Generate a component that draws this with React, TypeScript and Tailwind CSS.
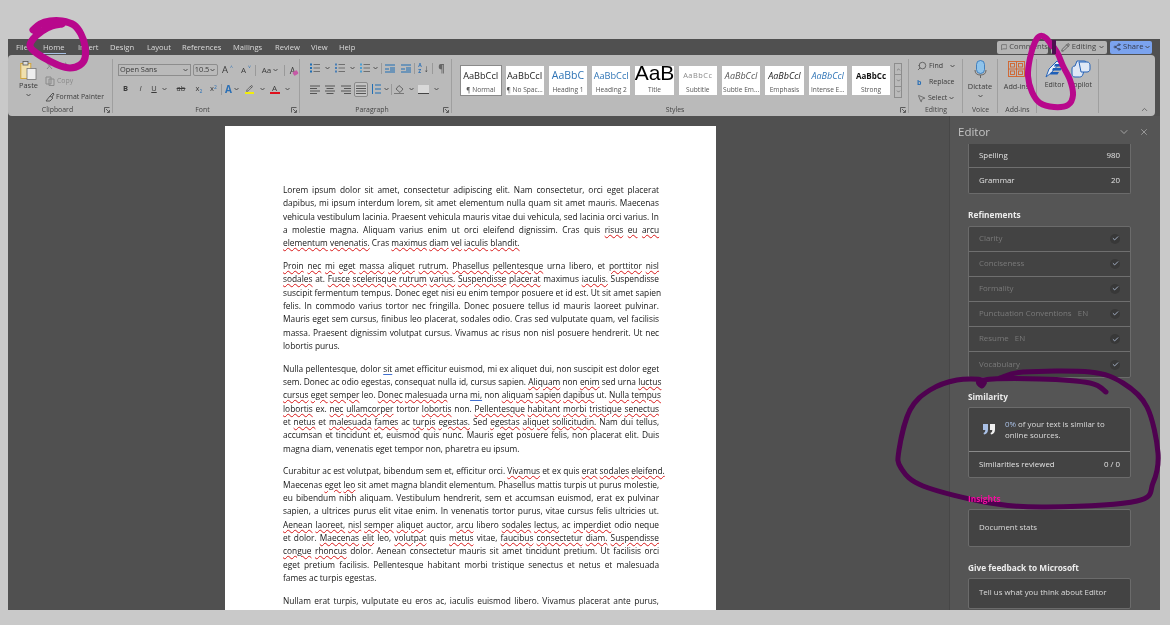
import React from "react";
import { Check, ChevronDown, ChevronUp, X, Search, MessageSquare, Pencil, Share2, MousePointer2 } from "lucide-react";

const paragraphs: { lines: string[]; last?: boolean }[] = [
  { last: true, lines: [
    "Lorem ipsum dolor sit amet, consectetur adipiscing elit. Nam consectetur, orci eget placerat",
    "dapibus, mi ipsum interdum lorem, sit amet elementum nulla quam sit amet mauris. Maecenas",
    "vehicula vestibulum lacinia. Praesent vehicula mauris vitae dui vehicula, sed lacinia orci varius. In",
    "a molestie magna. Aliquam varius enim ut orci eleifend dignissim. Cras quis _risus_ _eu_ _arcu_",
    "_elementum_ _venenatis._ Cras _maximus_ _diam_ _vel_ _iaculis_ _blandit._",
  ]},
  { last: true, lines: [
    "_Proin_ _nec_ _mi_ _eget_ _massa_ _aliquet_ _rutrum._ _Phasellus_ _pellentesque_ urna libero, et _porttitor_ _nisl_",
    "_sodales_ at. _Fusce_ _scelerisque_ _rutrum_ _varius._ _Suspendisse_ _placerat_ maximus _iaculis._ Suspendisse",
    "suscipit fermentum tempus. Donec eget nisi eu enim tempor posuere et id est. Ut sit amet sapien",
    "felis. In commodo varius tortor nec fringilla. Donec posuere tellus id mauris laoreet pulvinar.",
    "Mauris eget sem cursus, finibus leo placerat, sodales odio. Cras sed vulputate quam, vel facilisis",
    "massa. Praesent dignissim volutpat cursus. Vivamus ac risus non nisl posuere hendrerit. Ut nec",
    "lobortis purus.",
  ]},
  { last: true, lines: [
    "Nulla pellentesque, dolor ~sit~ amet efficitur euismod, mi ex aliquet dui, non suscipit est dolor eget",
    "sem. Donec ac odio egestas, consequat nulla id, cursus sapien. _Aliquam_ non _enim_ sed urna _luctus_",
    "_cursus_ _eget_ _semper_ leo. _Donec_ _malesuada_ urna ~mi,~ non _aliquam_ _sapien_ _dapibus_ ut. _Nulla_ _tempus_",
    "_lobortis_ ex. _nec_ _ullamcorper_ tortor _lobortis_ non. _Pellentesque_ _habitant_ _morbi_ _tristique_ _senectus_",
    "et _netus_ et _malesuada_ _fames_ ac _turpis_ _egestas._ Sed _egestas_ _aliquet_ _sollicitudin._ Nam dui tellus,",
    "accumsan et tincidunt et, euismod quis nunc. Mauris eget posuere felis, non placerat elit. Duis",
    "magna diam, venenatis eget tempor non, pharetra eu ipsum.",
  ]},
  { last: true, lines: [
    "Curabitur ac est volutpat, bibendum sem et, efficitur orci. _Vivamus_ et ex quis _erat_ _sodales_ _eleifend._",
    "Maecenas _eget_ _leo_ sit amet magna blandit elementum. Phasellus mattis turpis ut purus molestie,",
    "eu bibendum nibh aliquam. Vestibulum hendrerit, sem et accumsan euismod, erat ex pulvinar",
    "sapien, a ultrices purus elit vitae enim. In venenatis tortor purus, vitae cursus felis ultricies ut.",
    "_Aenean_ _laoreet,_ _nisl_ _semper_ _aliquet_ auctor, _arcu_ libero _sodales_ _lectus,_ ac _imperdiet_ odio neque",
    "et dolor. _Maecenas_ _elit_ leo, _volutpat_ quis _metus_ vitae, _faucibus_ _consectetur_ _diam._ _Suspendisse_",
    "_congue_ _rhoncus_ dolor. Aenean consectetur mauris sit amet tincidunt pretium. Ut facilisis orci",
    "eget pretium facilisis. Pellentesque habitant morbi tristique senectus et netus et malesuada",
    "fames ac turpis egestas.",
  ]},
  { lines: [
    "Nullam erat turpis, vulputate eu eros ac, iaculis euismod libero. Vivamus placerat ante purus,",
    "_tincidunt_ _mattis_ _nulla_ dictum et. _Integer_ _sodales_ _mollis_ _lectus,_ in _pretium_ _lacus_ _vehicula_ _eget._",
  ]},
];

function smooth(pts: number[][]) {
  let d = `M${pts[0][0]} ${pts[0][1]}`;
  for (let i = 0; i < pts.length - 1; i++) {
    const p0 = pts[Math.max(i - 1, 0)];
    const p1 = pts[i];
    const p2 = pts[i + 1];
    const p3 = pts[Math.min(i + 2, pts.length - 1)];
    d += `C${p1[0] + (p2[0] - p0[0]) / 6} ${p1[1] + (p2[1] - p0[1]) / 6} ${p2[0] - (p3[0] - p1[0]) / 6} ${p2[1] - (p3[1] - p1[1]) / 6} ${p2[0]} ${p2[1]}`;
  }
  return d;
}

function Line({ text, justify }: { text: string; justify: boolean }) {
  const parts = text.split(" ");
  return (
    <div className={justify ? "h-[13.33px] leading-[13.33px] whitespace-nowrap [text-align:justify] [text-align-last:justify]" : "h-[13.33px] leading-[13.33px] whitespace-nowrap"}>
      {parts.map((p, i) => {
        const red = p.startsWith("_");
        const blue = p.startsWith("~");
        const w = red || blue ? p.slice(1, -1) : p;
        return (
          <React.Fragment key={i}>
            {red ? (
              <span className="underline decoration-wavy decoration-[#d81818] decoration-[0.5px] underline-offset-[1px]">{w}</span>
            ) : blue ? (
              <span className="underline decoration-[#3f6fd0] decoration-[1px] underline-offset-[2px]">{w}</span>
            ) : (
              w
            )}
            {i < parts.length - 1 ? " " : ""}
          </React.Fragment>
        );
      })}
    </div>
  );
}

function Stroke({ d, w = 12, h = 12, className = "", children }: { d?: string; w?: number; h?: number; className?: string; children?: React.ReactNode }) {
  return (
    <svg width={w} height={h} viewBox={`0 0 ${w} ${h}`} fill="none" stroke="currentColor" strokeWidth="1" className={`shrink-0 ${className}`}>
      {d ? <path d={d} /> : null}
      {children}
    </svg>
  );
}

const Caret = ({ className = "" }: { className?: string }) => (
  <svg width="5" height="4" viewBox="0 0 5 4" className={`shrink-0 ${className}`} fill="none" stroke="#444" strokeWidth="0.9"><path d="M0.5 1l2 2 2-2" /></svg>
);

const Launcher = () => (
  <svg width="6" height="6" viewBox="0 0 6 6" fill="none" stroke="#444" strokeWidth="0.8" className="absolute right-[3px] bottom-[3px]"><path d="M0.5 5.5V0.5H5.5M2 2l3 3M5.5 3v2.5H3" /></svg>
);

function Group({ w, label, children, labelPad = "", launcher = false }: { w: string; label: string; children?: React.ReactNode; labelPad?: string; launcher?: boolean }) {
  return (
    <div className={`${w} relative flex h-full shrink-0 flex-col`}>
      <div className="min-h-0 flex-1">{children}</div>
      <div className={`h-[12px] pb-[1px] text-center text-[6.9px] leading-[11px] text-[#444] ${labelPad}`}>{label}</div>
      {launcher ? <Launcher /> : null}
      <div className="absolute top-[4px] right-0 bottom-[3px] w-px bg-[#9f9f9f]" />
    </div>
  );
}

const Cell = ({ w, children, className = "" }: { w: string; children?: React.ReactNode; className?: string }) => (
  <div className={`${w} flex h-full shrink-0 items-center justify-center gap-[2px] ${className}`}>{children}</div>
);
const VSep = () => <div className="h-[11px] w-px shrink-0 bg-[#999]" />;

const Bullets = ({ color = "#1f6fb5" }: { color?: string }) => (
  <svg width="10" height="10" viewBox="0 0 10 10" className="shrink-0"><rect x="0" y="0.5" width="2" height="2" fill={color} /><rect x="0" y="4" width="2" height="2" fill={color} /><rect x="0" y="7.5" width="2" height="2" fill={color} /><path d="M3.5 1.5H10M3.5 5H10M3.5 8.5H10" stroke="#666" strokeWidth="0.9" /></svg>
);
const AlignIcon = ({ d }: { d: string }) => <Stroke w={10} h={9} d={d} className="text-[#555]" />;

function Style({ sample, label, cls, selected }: { sample: string; label: string; cls: string; selected?: boolean }) {
  return (
    <div className={selected ? "flex h-[29px] w-[39.5px] shrink-0 flex-col items-center overflow-hidden bg-white outline outline-[1.5px] outline-[#8a8a8a]" : "flex h-[29px] w-[38.3px] shrink-0 flex-col items-center overflow-hidden bg-white"}>
      <div className={`flex h-[19px] shrink-0 items-center whitespace-nowrap ${cls}`}>{sample}</div>
      <div className="text-[6.6px] leading-[10px] whitespace-nowrap text-[#555]">{label}</div>
    </div>
  );
}

const Tab = ({ children, w, active = false }: { children: React.ReactNode; w: string; active?: boolean }) => (
  <div className={`${w} relative shrink-0 text-[7.6px] leading-[16px] whitespace-nowrap text-[#dcdcdc]`}>
    {children}
    {active ? <div className="absolute right-0 bottom-[1px] left-0 h-[1.5px] bg-[#a9c1e4]" /> : null}
  </div>
);

function Row({ label, right, check, dim, last, h = "h-[25.1px]" }: { label: React.ReactNode; right?: string; check?: boolean; dim?: boolean; last?: boolean; h?: string }) {
  return (
    <div className={`flex items-center justify-between px-[10px] text-[7.9px] ${h} ${last ? "" : "border-b border-[#6f6f6f]"} ${dim ? "text-[#7a7a7a]" : "text-[#e2e2e2]"}`}>
      <span className="whitespace-pre">{label}</span>
      {right ? <span className="whitespace-nowrap">{right}</span> : null}
      {check ? (
        <span className="flex h-[10px] w-[10px] items-center justify-center rounded-full bg-[#383838]">
          <Check size={7} strokeWidth={2.6} className="text-[#c4d4f0]" />
        </span>
      ) : null}
    </div>
  );
}

const Title = ({ children, className = "text-[#ececec]" }: { children: React.ReactNode; className?: string }) => (
  <div className={`text-[8.3px] leading-[11px] font-bold whitespace-nowrap ${className}`}>{children}</div>
);
const Card = ({ children, className = "" }: { children: React.ReactNode; className?: string }) => (
  <div className={`rounded-[2px] border border-[#6b6b6b] bg-[#434343] ${className}`}>{children}</div>
);

const circleHome = [[33, 30], [40, 24], [50, 21], [62, 21], [74, 25], [81, 34], [85, 46], [85, 58], [80, 65], [70, 68], [58, 65], [46, 59], [35, 52], [30, 46], [33, 39], [42, 31], [52, 26], [62, 24]];
const circleEditor = [[1052, 46], [1046, 38], [1040, 36], [1035, 42], [1030, 58], [1028, 76], [1032, 92], [1040, 103], [1054, 107], [1068, 105], [1073, 95], [1070, 80], [1063, 66], [1058, 54], [1053, 46]];
const circleSimilar = [[1106, 392], [1090, 383], [1040, 379], [983, 380], [982, 386], [983, 380], [957, 380], [930, 390], [910, 410], [899, 450], [901, 468], [923, 486], [990, 503], [1047, 507], [1137, 501], [1153, 483], [1158, 453], [1147, 407], [1123, 383], [1090, 372], [1023, 372], [1000, 378]];

export default function App() {
  return (
    <div className="relative h-[625px] w-[1170px] overflow-hidden bg-[#c9c9c9] px-[8px] pt-[39px] font-['Open_Sans',sans-serif] [filter:blur(0.4px)]">
      <div className="flex h-[571px] w-[1152px] flex-col overflow-hidden bg-[#505050]">
        {/* tab bar */}
        <div className="flex h-[16px] shrink-0 items-center pl-[8px]">
          <Tab w="w-[27px]">File</Tab>
          <Tab w="w-[22.5px]" active>Home</Tab>
          <div className="w-[12.5px] shrink-0" />
          <Tab w="w-[32px]">Insert</Tab>
          <Tab w="w-[37px]">Design</Tab>
          <Tab w="w-[35px]">Layout</Tab>
          <Tab w="w-[51px]">References</Tab>
          <Tab w="w-[42px]">Mailings</Tab>
          <Tab w="w-[36px]">Review</Tab>
          <Tab w="w-[28px]">View</Tab>
          <Tab w="w-[30px]">Help</Tab>
          <div className="ml-auto flex h-[13px] items-center gap-[3px] pr-[8px] text-[7.6px] text-[#444]">
            <div className="flex h-full w-[51px] items-center gap-[2px] rounded-[2px] bg-[#b4b4b4] pl-[4px]"><MessageSquare size={8} />Comments</div>
            <div className="flex h-full w-[56px] items-center justify-end gap-[2px] rounded-[2px] bg-[#b4b4b4] pr-[3px]"><Pencil size={9} />Editing<Caret className="ml-[1px]" /></div>
            <div className="flex h-full w-[42px] items-center gap-[2px] rounded-[2px] bg-[#7ba3ee] pl-[3px] text-[#33384a]"><Share2 size={8} />Share<Caret /></div>
          </div>
        </div>

        {/* ribbon */}
        <div className="relative mr-[5px] flex h-[61px] shrink-0 rounded-[4px] bg-[#bababa] text-[#3a3a3a]">
          {/* Clipboard */}
          <Group w="w-[105px]" label="Clipboard" labelPad="pr-[6px]" launcher>
            <div className="flex h-full">
              <div className="flex w-[37px] flex-col items-center pt-[6px] pl-[4px]">
                <svg width="17" height="19" viewBox="0 0 17 19" className="shrink-0">
                  <rect x="0.8" y="2.5" width="10" height="15" fill="#f0e0ae" stroke="#d2a63c" strokeWidth="1" />
                  <rect x="3" y="0.5" width="5" height="3.5" fill="#ddd" stroke="#555" strokeWidth="0.8" />
                  <rect x="7" y="7.5" width="9" height="11" fill="#eee" stroke="#777" strokeWidth="0.8" />
                </svg>
                <div className="text-[7.4px] leading-[11px]">Paste</div>
                <Caret className="mt-[2px]" />
              </div>
              <div className="flex flex-col pt-[2px] text-[6.9px] leading-[16px]">
                <div className="flex h-[16px] items-center gap-[2px] text-[#888]"><Stroke w={9} h={9} d="M1 1l6 7M8 1L2 8" />Cut</div>
                <div className="flex h-[16px] items-center gap-[2px] text-[#8a8a8a]"><Stroke w={10} h={10} d="M1 1h5v7H1zM4 3h5v6.500H4z" />Copy</div>
                <div className="flex h-[16px] items-center gap-[1px]"><Stroke w={10} h={10} d="M1 9l4-5 3 2-3 3zM5 4l3-3 1 1-2 3" className="text-[#555]" />Format Painter</div>
              </div>
            </div>
          </Group>

          {/* Font */}
          <Group w="w-[187px]" label="Font" labelPad="pr-[8px]" launcher>
            <div className="flex h-[21px] items-end pl-[5px]">
              <div className="flex h-[12px] w-[75px] items-center justify-between border border-[#8d8d8d] pr-[2px] pl-[1px] text-[7.4px]">Open Sans<Caret /></div>
              <div className="ml-[2px] flex h-[12px] w-[26px] items-center justify-between rounded-[2px] border border-[#8d8d8d] pr-[2px] pl-[1px] text-[7.4px]">10.5<Caret /></div>
              <div className="flex h-[12px] items-center">
                <Cell w="w-[19px]"><span className="text-[9.5px] leading-none">A</span><span className="-mt-[5px] text-[5px] leading-none text-[#2a6fb5]">^</span></Cell>
                <Cell w="w-[18px]"><span className="text-[8px] leading-none">A</span><span className="-mt-[5px] text-[5px] leading-none text-[#2a6fb5]">˅</span></Cell>
                <VSep />
                <Cell w="w-[28px]"><span className="text-[8px] leading-none">Aa</span><Caret /></Cell>
                <VSep />
                <Cell w="w-[15px]"><span className="relative text-[9px] leading-none">A<span className="absolute -right-[3px] bottom-0 h-[4px] w-[5px] rotate-[-30deg] rounded-[1px] bg-[#c65aa6]" /></span></Cell>
              </div>
            </div>
            <div className="mt-[6px] flex h-[14px] items-center pl-[5px] text-[7.5px]">
              <Cell w="w-[15px]" className="font-bold">B</Cell>
              <Cell w="w-[15px]" className="italic">I</Cell>
              <Cell w="w-[22px]"><span className="underline">U</span><Caret className="ml-[3px]" /></Cell>
              <Cell w="w-[22px]"><span className="line-through">ab</span></Cell>
              <Cell w="w-[14px]"><span>x<sub className="text-[5px] text-[#2a6fb5]">2</sub></span></Cell>
              <Cell w="w-[15px]"><span>x<sup className="text-[5px] text-[#2a6fb5]">2</sup></span></Cell>
              <VSep />
              <Cell w="w-[20px]"><span className="text-[10px] font-bold text-[#2a6fb5]">A</span><Caret /></Cell>
              <Cell w="w-[26px]"><span className="flex flex-col items-center"><Pencil size={7} /><span className="h-[2px] w-[9px] bg-[#f2ee0c]" /></span><Caret className="ml-[4px]" /></Cell>
              <Cell w="w-[23px]"><span className="flex flex-col items-center"><span className="text-[8px] leading-[8px]">A</span><span className="h-[2px] w-[10px] bg-[#e0101c]" /></span><Caret className="ml-[3px]" /></Cell>
            </div>
          </Group>

          {/* Paragraph */}
          <Group w="w-[152px]" label="Paragraph" labelPad="pr-[8px]" launcher>
            <div className="flex h-[19px] items-end pl-[7px]">
              <div className="flex h-[12px] items-center">
                <Cell w="w-[25px]"><Bullets /><Caret className="ml-[3px]" /></Cell>
                <Cell w="w-[25px]"><Bullets color="#4a7fb5" /><Caret className="ml-[3px]" /></Cell>
                <Cell w="w-[24px]"><Bullets color="#4a9fd5" /><Caret className="ml-[1px]" /></Cell>
                <VSep />
                <Cell w="w-[16px]"><Stroke w={10} h={9} d="M0 1h10M5 4h5M5 6h5M0 8h10M4 5H0" className="text-[#1f6fb5]" /></Cell>
                <Cell w="w-[16px]"><Stroke w={10} h={9} d="M0 1h10M5 4h5M5 6h5M0 8h10M0 5h4" className="text-[#1f6fb5]" /></Cell>
                <VSep />
                <Cell w="w-[17px]"><span className="flex flex-col text-[5px] leading-[6px] font-bold text-[#2a6fb5]"><span>A</span><span>Z</span></span><span className="text-[10px] leading-none">↓</span></Cell>
                <VSep />
                <Cell w="w-[17px]"><span className="text-[10px] leading-none font-bold text-[#666]">¶</span></Cell>
              </div>
            </div>
            <div className="mt-[7.5px] flex h-[15px] items-center pl-[7px]">
              <Cell w="w-[15px]"><AlignIcon d="M0 1h10M0 3.500h7M0 6h10M0 8.500h7" /></Cell>
              <Cell w="w-[16px]"><AlignIcon d="M0 1h10M1.500 3.500h7M0 6h10M1.500 8.500h7" /></Cell>
              <Cell w="w-[16px]"><AlignIcon d="M0 1h10M3 3.500h7M0 6h10M3 8.500h7" /></Cell>
              <Cell w="w-[14px]" className="rounded-[2px] border border-[#8a8a8a] bg-[#c4c4c4]"><AlignIcon d="M0 1h10M0 3.500h10M0 6h10M0 8.500h10" /></Cell>
              <Cell w="w-[23px]"><Stroke w={10} h={10} d="M1.500 0v10M4 1h6M4 5h6M4 9h6" className="text-[#1f6fb5]" /><Caret className="ml-[1px]" /></Cell>
              <VSep />
              <Cell w="w-[24px]"><span className="flex flex-col items-center"><Stroke w={9} h={8} d="M4 0.500L8 4 5 7.500 1 4z" className="text-[#666]" /><span className="h-px w-[10px] bg-[#777]" /></span><Caret className="ml-[3px]" /></Cell>
              <Cell w="w-[24px]"><span className="h-[9px] w-[11px] bg-[#d9d9d9] [border-bottom:1px_solid_#444]" /><Caret className="ml-[3px]" /></Cell>
            </div>
          </Group>

          {/* Styles */}
          <Group w="w-[457px]" label="Styles" labelPad="pr-[11px]" launcher>
            <div className="flex h-[33px] pt-[11px] pl-[9px]">
              <div className="flex gap-[5px]">
                <Style selected sample="AaBbCcI" label="¶ Normal" cls="text-[9.2px] text-[#222]" />
                <Style sample="AaBbCcI" label="¶ No Spac..." cls="text-[9.2px] text-[#222]" />
                <Style sample="AaBbC" label="Heading 1" cls="text-[10.5px] text-[#2f74b5]" />
                <Style sample="AaBbCcI" label="Heading 2" cls="text-[9.2px] text-[#2f74b5]" />
                <Style sample="AaB" label="Title" cls="pb-[6px] text-[21px] leading-[14px] text-black font-['Liberation_Sans',sans-serif]" />
                <Style sample="AaBbCc" label="Subtitle" cls="text-[7.4px] tracking-[0.5px] text-[#8a8a8a]" />
                <Style sample="AaBbCcI" label="Subtle Em..." cls="text-[9px] italic text-[#555]" />
                <Style sample="AaBbCcI" label="Emphasis" cls="text-[9px] italic text-[#222]" />
                <Style sample="AaBbCcI" label="Intense E..." cls="text-[9px] italic text-[#2f74b5]" />
                <Style sample="AaBbCc" label="Strong" cls="text-[8px] font-bold text-[#111]" />
              </div>
              <div className="-mt-[3px] ml-[4px] flex h-[35px] w-[8px] shrink-0 flex-col border border-[#8d8d8d]">
                <div className="flex flex-1 items-center justify-center border-b border-[#8d8d8d]"><ChevronUp size={5} /></div>
                <div className="flex flex-1 items-center justify-center border-b border-[#8d8d8d]"><ChevronDown size={5} /></div>
                <div className="flex flex-1 items-center justify-center"><ChevronDown size={5} /></div>
              </div>
            </div>
          </Group>

          {/* Editing */}
          <Group w="w-[54px]" label="Editing">
            <div className="flex flex-col pt-[3px] pl-[8px] text-[7px]">
              <div className="flex h-[16px] items-center gap-[2px]"><Search size={10} className="-scale-x-100 text-[#555]" />Find<Caret className="ml-[5px]" /></div>
              <div className="flex h-[16px] items-center gap-[2px]"><span className="w-[10px] text-[7px] leading-none font-bold text-[#2a6fb5]">b</span>Replace</div>
              <div className="flex h-[16px] items-center gap-[2px]"><MousePointer2 size={9} className="text-[#555]" />Select<Caret /></div>
            </div>
          </Group>

          {/* Voice */}
          <Group w="w-[35px]" label="Voice">
            <div className="flex flex-col items-center pt-[5px] pr-[1px]">
              <svg width="13" height="19" viewBox="0 0 13 19" className="shrink-0"><rect x="2.500" y="0.500" width="8" height="13" rx="4" fill="#8fc3ea" stroke="#2a6fb5" strokeWidth="0.8" /><path d="M1 10c0 3.500 2 5 5.500 5S12 13.500 12 10M6.500 15v3" stroke="#666" fill="none" /></svg>
              <div className="mt-[2px] text-[7.4px] leading-[10px]">Dictate</div>
              <Caret className="mt-[3px]" />
            </div>
          </Group>

          {/* Add-ins */}
          <Group w="w-[39px]" label="Add-ins">
            <div className="flex flex-col items-center pt-[6px] pr-[2px]">
              <svg width="17" height="16" viewBox="0 0 17 16" className="shrink-0" fill="none" stroke="#d2622a" strokeWidth="0.9"><rect x="0.500" y="0.500" width="16" height="15" /><path d="M0.500 8h16M8.500 0.500v15" /><rect x="2.500" y="2.500" width="4" height="3.500" /><rect x="10.500" y="2.500" width="4" height="3.500" /><rect x="2.500" y="10" width="4" height="3.500" /><rect x="10.500" y="10" width="4" height="3.500" /></svg>
              <div className="mt-[4px] text-[7.2px] leading-[10px] whitespace-nowrap">Add-ins</div>
            </div>
          </Group>

          {/* Editor and Copilot */}
          <Group w="w-[62px]" label="">
            <div className="flex pt-[5px] pl-[5px]">
              <div className="flex w-[25px] flex-col items-center">
                <svg width="20" height="18" viewBox="0 0 20 18" className="shrink-0"><path d="M1 17l3-8 8-8 3 2-9 10z" fill="#e8eef8" stroke="#2563b8" strokeWidth="1" /><path d="M10 4h9l-1.500 2.500H9zM8 8h9l-1.500 2.500H7zM6 12h8l-1.500 2.500H5z" fill="#1f5fb8" /></svg>
                <div className="mt-[2px] text-[7px] leading-[10px]">Editor</div>
              </div>
              <div className="flex w-[27px] flex-col items-center">
                <svg width="20" height="18" viewBox="0 0 20 18" className="shrink-0" fill="#dfe8f6" stroke="#2563b8" strokeWidth="1"><path d="M6 1h7c2 0 2.500 1 2 3l-3 10c-.5 2-1.500 3-3.500 3H4c-2 0-3-1-3-3V9c0-2 1-3 3-3z" /><path d="M8 2h8c2.500 0 3 2 3 4v3c0 2-1.500 3-3 3h-6z" /></svg>
                <div className="mt-[2px] text-[7px] leading-[10px]">Copilot</div>
              </div>
            </div>
          </Group>
          <ChevronUp size={9} className="absolute right-[6px] bottom-[2px] text-[#555]" />
        </div>

        {/* main */}
        <div className="flex min-h-0 flex-1">
          <div className="flex min-w-0 flex-1 justify-start overflow-hidden pt-[10px] pl-[217px]">
            <div className="h-[600px] w-[491px] shrink-0 bg-white pt-[57px] pr-[57px] pl-[58px] text-[8.35px] text-[#151515]">
              {paragraphs.map((p, i) => (
                <div key={i} className={i === 0 ? "" : "mt-[9.4px]"}>
                  {p.lines.map((l, j) => (
                    <Line key={j} text={l} justify={!(p.last && j === p.lines.length - 1)} />
                  ))}
                </div>
              ))}
            </div>
          </div>
          <div className="flex w-[211px] shrink-0 flex-col overflow-hidden border-l border-[#474747] bg-[#555555]">
            <div className="flex h-[28px] shrink-0 items-center justify-between pt-[4px] pr-[11px] pl-[8px]">
              <span className="text-[11.5px] text-[#c4c4c4]">Editor</span>
              <span className="flex items-center gap-[9px] text-[#d8d8d8]"><ChevronDown size={12} strokeWidth={1.2} /><X size={10} strokeWidth={1.2} /></span>
            </div>
            <div className="ml-[18px] w-[163px]">
              <Card className="rounded-t-none border-t-0">
                <Row label="Spelling" right="980" h="h-[24px]" />
                <Row label="Grammar" right="20" last />
              </Card>
              <Title className="mt-[14.5px] text-[#ececec]">Refinements</Title>
              <Card className="mt-[6px]">
                <Row dim check label="Clarity" />
                <Row dim check label="Conciseness" />
                <Row dim check label="Formality" />
                <Row dim check label="Punctuation Conventions   EN" />
                <Row dim check label="Resume   EN" />
                <Row dim check label="Vocabulary" last />
              </Card>
              <Title className="mt-[13.3px] text-[#ececec]">Similarity</Title>
              <Card className="mt-[5px]">
                <div className="flex h-[43.5px] items-center border-b border-[#8a8a8a]">
                  <div className="flex w-[36px] justify-end pr-[10px]">
                    <svg width="12" height="11" viewBox="0 0 12 11" className="shrink-0"><path d="M0 0h5v5.500C5 8.500 3.500 10 1 10.500L0.500 9C1.800 8.500 2.300 7.500 2.300 6H0z" fill="#a9c0e6" /><path d="M7 0h5v5.500C12 8.500 10.500 10 8 10.500L7.500 9C8.800 8.500 9.300 7.500 9.300 6H7z" fill="#f0f0f0" /></svg>
                  </div>
                  <div className="text-[7.9px] leading-[11px] text-[#dcdcdc]"><span className="text-[#a9c0e6]">0%</span> of your text is similar to<br />online sources.</div>
                </div>
                <Row label="Similarities reviewed" right="0 / 0" last />
              </Card>
              <Title className="relative z-10 mt-[15px] text-[#f0109e]">Insights</Title>
              <Card className="mt-[5px] flex h-[38px] items-center px-[10px] text-[7.9px] text-[#dcdcdc]">Document stats</Card>
              <Title className="mt-[14.500px] text-[#ececec]">Give feedback to Microsoft</Title>
              <Card className="mt-[5px] flex h-[31px] items-center px-[10px] text-[7.9px] whitespace-nowrap text-[#dcdcdc]">Tell us what you think about Editor</Card>
            </div>
          </div>
        </div>
      </div>

      {/* hand-drawn annotations */}
      <svg width="1170" height="625" viewBox="0 0 1170 625" fill="none" strokeLinecap="round" strokeLinejoin="round" className="pointer-events-none absolute inset-0">
        <path d={smooth(circleHome)} stroke="#b8088c" strokeWidth="7" />
        <path d={smooth(circleEditor)} stroke="#b8088c" strokeWidth="6" />
        <rect x="1052" y="40" width="4" height="14" fill="#4c1050" />
        <path d={smooth(circleSimilar)} stroke="#4f0150" strokeWidth="5" />
      </svg>
    </div>
  );
}
